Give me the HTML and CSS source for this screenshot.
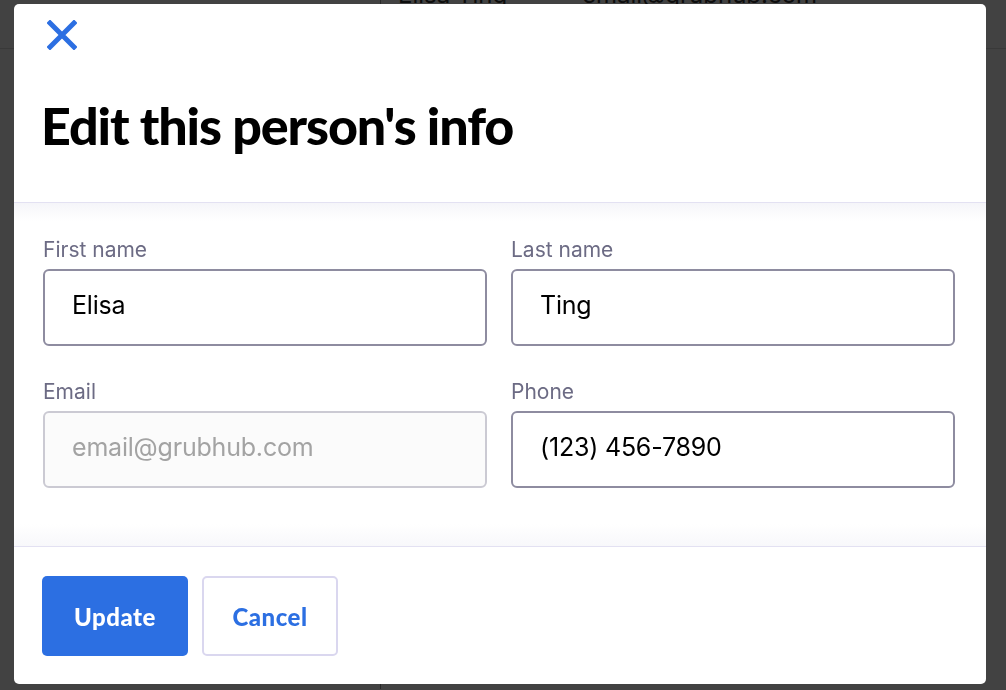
FILE: index.html
```html
<!DOCTYPE html>
<html lang="en">
<head>
  <meta charset="UTF-8">
  <title>Edit person</title>
  <link rel="stylesheet" href="styles.css">
</head>
<body>

<!-- the people table behind the dialog -->
<div class="page">
  <div class="people-row">
    <div class="people-side"></div>
    <div class="people-name">Elisa Ting</div>
    <div class="people-email">email@grubhub.com</div>
  </div>
  <div class="people-row next">
    <div class="people-side"></div>
  </div>
</div>

<div class="overlay">
  <div class="modal">
    <div class="modal-header">
      <button class="close-btn" aria-label="Close">
        <svg width="30" height="30" viewBox="0 0 30 30">
          <path d="M3 3 L27 27 M27 3 L3 27" stroke="#2c6fe2" stroke-width="5" stroke-linecap="square"/>
        </svg>
      </button>
      <h1>Edit this person's info</h1>
    </div>

    <div class="modal-body">
      <div class="form-grid">
        <div class="field">
          <label>First name</label>
          <input type="text" value="Elisa">
        </div>
        <div class="field">
          <label>Last name</label>
          <input type="text" value="Ting">
        </div>
        <div class="field">
          <label>Email</label>
          <input type="text" placeholder="email@grubhub.com" disabled>
        </div>
        <div class="field">
          <label>Phone</label>
          <input type="text" value="(123) 456-7890">
        </div>
      </div>
    </div>

    <div class="modal-footer">
      <button class="update-btn">Update</button>
      <button class="cancel-btn">Cancel</button>
    </div>
  </div>
</div>

</body>
</html>
```

FILE: styles.css
```css
body {
  margin: 0;
  background: #fff;
  font-family: "Inter", "Liberation Sans", sans-serif;
  overflow: hidden;
}

.page {
  margin-top: -24px;
}

.people-row {
  display: flex;
  height: 72px;
  border-bottom: 1px solid #dbdbdb;
  font-size: 24px;
  color: #333;
}

.people-side {
  width: 380px;
  border-right: 1px solid #999;
}

.people-name {
  width: 184px;
  padding: 4px 0 0 17px;
}

.people-email {
  padding: 4px 0 0 0;
}

.people-row.next {
  height: 640px;
  border-bottom: none;
}

.overlay {
  position: fixed;
  inset: 0;
  background: rgba(0, 0, 0, 0.74);
}

.modal {
  position: absolute;
  top: 4px;
  left: 14px;
  width: 972px;
  height: 680px;
  background: #fff;
  border-radius: 5px;
  display: flex;
  flex-direction: column;
  overflow: hidden;
}

.modal-header {
  padding: 16px 29px 46px 33px;
  border-bottom: 1px solid #e3e1f2;
}

.close-btn {
  display: block;
  width: 30px;
  height: 30px;
  padding: 0;
  border: none;
  background: none;
  cursor: pointer;
}

.close-btn svg {
  display: block;
}

h1 {
  margin: 44px 0 0 -6px;
  font-family: "Lato", sans-serif;
  font-weight: 900;
  font-size: 52px;
  line-height: 62px;
  letter-spacing: -1.1px;
  color: #000;
}

.modal-body {
  flex: 1;
  padding: 35px 31px 0 29px;
  background: linear-gradient(#f5f5f9, #fff 18px, #fff calc(100% - 22px), #f8f8fb);
}

.form-grid {
  display: grid;
  grid-template-columns: 444px 444px;
  column-gap: 24px;
  row-gap: 34px;
}

.field label {
  display: block;
  font-size: 21px;
  line-height: 24px;
  color: #6c6b84;
  margin-bottom: 7px;
}

.field input {
  box-sizing: border-box;
  width: 100%;
  height: 77px;
  padding: 0 27px 5px;
  border: 2px solid #8e8ca0;
  border-radius: 6px;
  font-family: "Inter", "Liberation Sans", sans-serif;
  font-size: 25px;
  letter-spacing: -0.2px;
  color: #000;
  background: #fff;
}

.field input:disabled {
  border-color: #cbcad3;
  background: #fbfbfb;
}

.field input::placeholder {
  color: #a3a3a3;
}

.modal-footer {
  display: flex;
  gap: 14px;
  padding: 29px 28px 0;
  height: 108px;
  border-top: 1px solid #e3e1f2;
}

.update-btn, .cancel-btn {
  height: 80px;
  font-family: "Lato", sans-serif;
  font-weight: 900;
  font-size: 24px;
  letter-spacing: 0.5px;
  border-radius: 5px;
  cursor: pointer;
}

.update-btn {
  width: 146px;
  background: #2c6fe2;
  color: #fff;
  border: none;
}

.cancel-btn {
  width: 136px;
  background: #fff;
  color: #2c6fe2;
  border: 2px solid #dad7ef;
}
```
